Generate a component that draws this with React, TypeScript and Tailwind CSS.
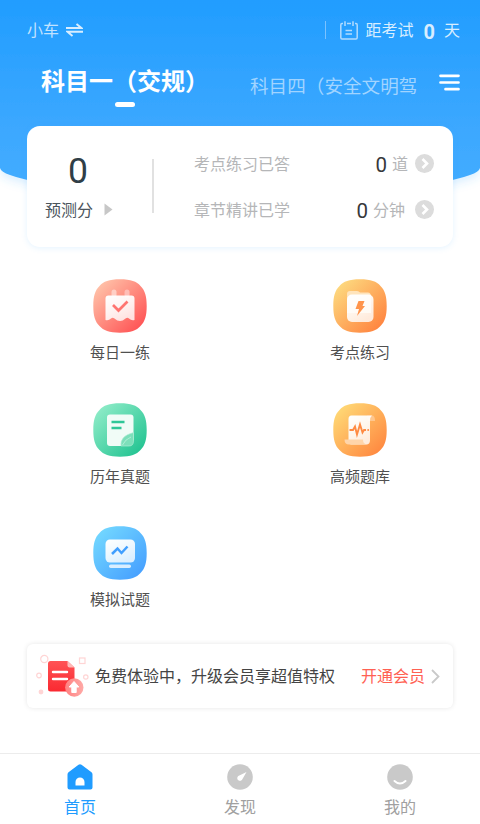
import React from 'react';

function Tile({ id, from, to, children }: { id: string; from: string; to: string; children: React.ReactNode }) {
  return (
    <svg className="block h-[54px] w-[54px]" viewBox="0 0 54 54">
      <defs>
        <linearGradient id={id} x1="0" y1="0" x2="1" y2="1">
          <stop offset="0.08" stopColor={from} />
          <stop offset="0.92" stopColor={to} />
        </linearGradient>
        <linearGradient id={id + '-paper'} x1="0" y1="0" x2="0.5" y2="1">
          <stop offset="0" stopColor="#fff" />
          <stop offset="1" stopColor="#fff" stopOpacity="0.8" />
        </linearGradient>
      </defs>
      <path d="M27 .3C38 .3 43.500 2.500 47.500 7C52 11.500 53.700 17 53.700 27S52 42.500 47.500 47C43.500 51.500 38 53.700 27 53.700S10.500 51.500 6.500 47C2 42.500 .3 37 .3 27S2 11.500 6.500 7C10.500 2.500 16 .3 27 .3Z" fill={`url(#${id})`} />
      {children}
    </svg>
  );
}

const DailyIcon = () => (
  <Tile id="daily" from="#ffc4aa" to="#ff5153">
    <rect x="18.500" y="10.500" width="5" height="8" rx="2.500" fill="#ffcfc5" />
    <rect x="31.500" y="10.500" width="5" height="8" rx="2.500" fill="#ffbdb6" />
    <path d="M15.500 16.500H38.500Q41.500 16.500 41.500 19.500V41Q38.500 42 36 39.500Q34.500 38 32.500 39.500Q27 44.500 21.500 39.500Q19.500 38 18 39.500Q15.500 42 12.500 41V19.500Q12.500 16.500 15.500 16.500Z" fill="url(#daily-paper)" />
    <path d="M20 26L25.500 31.500L34.500 22.500" fill="none" stroke="#ff7470" strokeWidth="2.700" />
  </Tile>
);

const PointsIcon = () => (
  <Tile id="points" from="#fddb80" to="#ff823e">
    <path d="M14 34V15Q14 12 17 12H24Q26 12 27 13.500H35Q38 13.500 38 18V34Z" fill="#ffe4bb" />
    <rect x="14" y="15.500" width="26.500" height="27.500" rx="5" fill="url(#points-paper)" />
    <path d="M25.500 22H31.500L29.500 27H32L24 37L26 30H22.500Z" fill="#ff944b" />
  </Tile>
);

const HistoryIcon = () => (
  <Tile id="history" from="#8fecc8" to="#22c391">
    <path d="M17 11.500H37.500Q40.500 11.500 40.500 14.500V37L34.500 43H17Q14 43 14 40V14.500Q14 11.500 17 11.500Z" fill="#f1fcf7" />
    <path d="M18.500 19H31.500M18.500 25H28.500" stroke="#30c798" strokeWidth="2.500" />
    <path d="M28 43Q26.500 33 40.500 29.500V38Q40.500 43 36 43Z" fill="#7ddfba" stroke="#b9f0da" strokeWidth=".6" />
    <path d="M29.500 42Q32 36.500 38 34" fill="none" stroke="#c4f3df" strokeWidth=".7" />
  </Tile>
);

const BankIcon = () => (
  <Tile id="bank" from="#ffda76" to="#ff873f">
    <path d="M34 12.500H39Q42 12.500 42 18H35Z" fill="#ffc68d" />
    <path d="M18.500 12.500H39Q37 14 37 18V37Q37 41 34 41.500H18Q15.500 41 15.500 37V16Q15.500 12.500 18.500 12.500Z" fill="url(#bank-paper)" />
    <path d="M11.500 36.500H30Q30 41 34 41.500H16Q11.500 41.500 11.500 36.500Z" fill="#ffd5aa" />
    <path d="M16.500 27H20L22 23.500L24 31.500L27 21.500L29.500 29.500L31 27H33" fill="none" stroke="#ff8b42" strokeWidth="1.900" />
    <circle cx="35.200" cy="27" r="1" fill="#ff8b42" />
  </Tile>
);

const MockIcon = () => (
  <Tile id="mock" from="#73d8ff" to="#469fff">
    <rect x="12.500" y="13.500" width="29.500" height="23" rx="4.500" fill="url(#mock-paper)" />
    <path d="M19 28L24.500 22.500L28.500 27L34.500 20.500" fill="none" stroke="#419fff" strokeWidth="2.500" />
    <rect x="16" y="38.500" width="22" height="3.500" rx="1.700" fill="#d9eeff" />
  </Tile>
);

const ENTRIES = [
  { label: '每日一练', icon: <DailyIcon /> },
  { label: '考点练习', icon: <PointsIcon /> },
  { label: '历年真题', icon: <HistoryIcon /> },
  { label: '高频题库', icon: <BankIcon /> },
  { label: '模拟试题', icon: <MockIcon /> },
];

function HeaderShape() {
  return (
    <svg className="absolute left-0 top-0 h-[200px] w-full" viewBox="0 0 480 200">
      <defs>
        <linearGradient id="sky" x1="0" y1="0" x2="0" y2="1">
          <stop offset="0" stopColor="#219dff" />
          <stop offset="0.7" stopColor="#3ca8ff" />
          <stop offset="1" stopColor="#43acff" />
        </linearGradient>
        <filter id="glow" x="-5%" y="-5%" width="110%" height="120%">
          <feDropShadow dx="0" dy="5" stdDeviation="4" floodColor="#40aaff" floodOpacity="0.17" />
        </filter>
      </defs>
      <path d="M0 0H480V168Q479 172 470 175Q457 180 430 184H50Q23 180 10 175Q1 172 0 168Z" fill="url(#sky)" filter="url(#glow)" />
    </svg>
  );
}

function StatRow({ label, unit }: { label: string; unit: string }) {
  return (
    <div className="flex h-[46px] items-center text-[16px] text-[#b5b6b8]">
      <span>{label}</span>
      <span className="ml-auto pt-[3px] font-[Roboto] text-[20.500px] leading-[24px] text-[#36383b]">0</span>
      <span className="ml-[5px]">{unit}</span>
      <svg className={unit === '道' ? 'ml-[7px] h-[19px] w-[19px]' : 'ml-[10px] h-[19px] w-[19px]'} viewBox="0 0 19 19">
        <circle cx="9.5" cy="9.5" r="9.5" fill="#dcdcdc" />
        <path d="M7.500 5L12 9.500L7.500 14" fill="none" stroke="#fff" strokeWidth="2.600" />
      </svg>
    </div>
  );
}

function MemberIcon() {
  return (
    <svg className="h-[48px] w-[54px] shrink-0" viewBox="0 0 54 48">
      <defs>
        <linearGradient id="doc" x1="0" y1="0" x2="0" y2="1">
          <stop stopColor="#ff5355" />
          <stop offset="1" stopColor="#fa2931" />
        </linearGradient>
        <linearGradient id="up" x1="0" y1="0" x2="1" y2="0">
          <stop stopColor="#ff8181" />
          <stop offset="1" stopColor="#ffaaa7" />
        </linearGradient>
      </defs>
      <g fill="none" stroke="#ffd5d5" strokeWidth="1.200">
        <circle cx="8.300" cy="7" r="3.600" />
        <rect x="43.500" y="6" width="5.500" height="5.500" />
        <circle cx="3" cy="23.500" r="2.300" />
        <circle cx="49.800" cy="25" r="2.200" />
      </g>
      <circle cx="5" cy="40" r="2.400" fill="#ffd5d5" />
      <path d="M14.500 9H31.500L38.500 15.500V37Q38.500 39.500 36 39.500H14.500Q12 39.500 12 37V11.500Q12 9 14.500 9Z" fill="url(#doc)" />
      <path d="M31.500 9V13.500Q31.500 15.500 33.500 15.500H38.500Z" fill="#ffb9b7" />
      <path d="M17 20H31M17 27H31" stroke="#fff" strokeWidth="2.400" strokeLinecap="round" />
      <circle cx="38.300" cy="35.500" r="9.200" fill="url(#up)" />
      <path d="M38 29.500L42.800 35H40.200V40.500H35.800V35H33.200Z" fill="#fff" stroke="#fff" strokeLinejoin="round" />
    </svg>
  );
}

export default function App() {
  return (
    <div className="relative flex h-[824px] w-[480px] flex-col overflow-hidden bg-white font-['Noto_Sans_CJK_SC',sans-serif] whitespace-nowrap">
      <HeaderShape />
      <header className="relative h-[126px] text-white">
        <div className="flex h-[60px] items-center pl-[27px] pr-5 text-[16px] text-[#d8edff]">
          <span className="pb-[2px] text-[#c2e2ff]">小车</span>
          <svg className="ml-[7px] h-[14px] w-[17px]" viewBox="0 0 17 14" fill="none" stroke="#d8edff" strokeWidth="1.900">
            <path d="M0 5H15.500L10.500 .9M17 8.800H1.500L6.500 13" />
          </svg>
          <span className="ml-auto h-[18px] w-px bg-[#7bc2ff]" />
          <svg className="ml-[14px] h-[19px] w-[18px]" viewBox="0 0 18 19" fill="none" stroke="#b1dbff" strokeWidth="1.500">
            <path d="M3 2.500H2Q.8 2.500 .8 4V16.500Q.8 18 2 18H16Q17.200 18 17.200 16.500V4Q17.200 2.500 16 2.500H15M7 2.500H11M5 .3V5M13 .3V5M5.500 9.500H12M5.500 13H12" />
          </svg>
          <span className="ml-[7px] pb-[2px]">距考试</span>
          <span className="ml-[10px] pt-[4px] font-[Roboto] text-[20px] leading-[24px] font-bold">0</span>
          <span className="ml-[9px] pb-[2px]">天</span>
        </div>
        <nav className="flex h-[48px] items-start pl-[41px] pr-5">
          <div className="flex w-[168px] flex-col">
            <span className="h-[42px] text-[24px] leading-[40px] font-bold">科目一（交规）</span>
            <span className="ml-[74px] h-[5px] w-[20px] rounded-full bg-white" />
          </div>
          <span className="ml-[41px] text-[18.600px] leading-[50px] text-[#a1d4ff]">科目四（安全文明驾</span>
          <svg className="ml-auto mt-[14px] h-[17px] w-[21px]" viewBox="0 0 21 17" stroke="#fff" strokeWidth="2.700" strokeLinecap="round">
            <path d="M1.500 1.800H19.500M1.500 8.500H19.500M6.500 15.200H19.500" />
          </svg>
        </nav>
      </header>

      <section className="relative mx-[27px] flex h-[121px] shrink-0 rounded-[13px] bg-white shadow-[0_1px_6px_rgba(64,170,255,0.14)]">
        <div className="w-[125px] pt-[24px]">
          <div className="ml-[41px] h-[44px] font-[Roboto] text-[35.500px] leading-[42px] text-[#303e47]">0</div>
          <div className="flex items-center pl-[18px] text-[16px] leading-[31px] text-[#4b555c]">
            预测分
            <svg className="ml-[11px] h-[13px] w-[9px]" viewBox="0 0 9 13"><path d="M.5 .5L8.500 6.500L.5 12.500Z" fill="#c7c7c7" /></svg>
          </div>
        </div>
        <span className="mt-[33px] h-[54px] w-[2px] bg-[#e1e1e1]" />
        <div className="ml-[40px] mr-[19px] flex-1 pt-[14px]">
          <StatRow label="考点练习已答" unit="道" />
          <StatRow label="章节精讲已学" unit="分钟" />
        </div>
      </section>

      <section className="mt-[32px] grid h-[370px] shrink-0 auto-rows-[123.500px] grid-cols-2">
        {ENTRIES.map((entry) => (
          <div key={entry.label} className="flex flex-col items-center">
            {entry.icon}
            <span className="mt-[8px] text-[15px] leading-[22px] text-[#505050]">{entry.label}</span>
          </div>
        ))}
      </section>

      <section className="mx-[27px] mt-[-5px] flex h-[64px] shrink-0 items-center rounded-[6px] bg-white pl-[9px] pr-[13px] text-[16px] text-[#444] shadow-[0_0_5px_rgba(0,0,0,0.1)]">
        <MemberIcon />
        <span className="ml-[5px] pb-[2px]">免费体验中，升级会员享超值特权</span>
        <span className="ml-auto pb-[2px] text-[#ff6153]">开通会员</span>
        <svg className="ml-[6px] h-[15px] w-[9px]" viewBox="0 0 9 15" fill="none" stroke="#c9c9c9" strokeWidth="1.800"><path d="M1 1L7.500 7.500L1 14" /></svg>
      </section>

      <footer className="mt-auto grid h-[71px] grid-cols-3 border-t border-[#ececec] text-[16px] leading-[24px] text-[#a0a0a0]">
        <div className="flex flex-col items-center pt-[10px] text-[#209cff]">
          <svg className="h-[26px] w-[26px]" viewBox="0 0 26 26">
            <path fillRule="evenodd" d="M11.500 .8Q13 -.3 14.500 .8L24.500 8.200Q25.500 9 25.500 10.500V23.500Q25.500 25.500 23.500 25.500H2.500Q.5 25.500 .5 23.500V10.500Q.5 9 1.500 8.200ZM8.500 21.500H17.500V18A4.500 4.500 0 0 0 8.500 18Z" fill="#209cff" />
          </svg>
          <span className="mt-[4px]">首页</span>
        </div>
        <div className="flex flex-col items-center pt-[10px]">
          <svg className="h-[26px] w-[26px]" viewBox="0 0 26 26">
            <circle cx="13" cy="13" r="12.800" fill="#c9c9c9" />
            <path d="M19.500 8L15.500 15A2.700 2.700 0 1 1 11.300 12Z" fill="#fff" />
          </svg>
          <span className="mt-[4px]">发现</span>
        </div>
        <div className="flex flex-col items-center pt-[10px]">
          <svg className="h-[26px] w-[26px]" viewBox="0 0 26 26">
            <circle cx="13" cy="13" r="12.800" fill="#c9c9c9" />
            <path d="M7.500 17Q13 22 18.500 17" fill="none" stroke="#fff" strokeWidth="2" strokeLinecap="round" />
          </svg>
          <span className="mt-[4px]">我的</span>
        </div>
      </footer>
    </div>
  );
}
